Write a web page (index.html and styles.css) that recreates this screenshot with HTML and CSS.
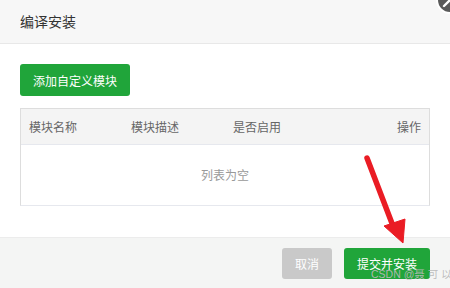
FILE: index.html
```html
<!DOCTYPE html>
<html lang="zh">
<head>
<meta charset="utf-8">
<link rel="stylesheet" href="styles.css">
</head>
<body>
<div class="dialog">
  <div class="header">编译安装</div>
  <span class="close" aria-label="关闭">
    <svg width="30" height="30" viewBox="0 0 30 30"><circle cx="15" cy="15" r="13" fill="#5a5a5a" stroke="#fff" stroke-width="2"/><path d="M9 21 L21 9 M9 9 L21 21" stroke="#fff" stroke-width="2.4" stroke-linecap="round"/></svg>
  </span>
  <div class="content">
    <button class="btn btn-green btn-add">添加自定义模块</button>
    <div class="table">
      <div class="thead">
        <span class="c1">模块名称</span>
        <span class="c2">模块描述</span>
        <span class="c3">是否启用</span>
        <span class="c4">操作</span>
      </div>
      <div class="empty">列表为空</div>
    </div>
  </div>
  <div class="footer">
    <button class="btn btn-gray">取消</button>
    <button class="btn btn-green">提交并安装</button>
  </div>
  <svg class="arrow" width="450" height="288" viewBox="0 0 450 288">
    <path d="M367 158 L393 226" stroke="#ea1c24" stroke-width="5.5" stroke-linecap="round"/>
    <path d="M384 226 L405 219 L403 243 Z" fill="#ea1c24" stroke="#ea1c24" stroke-width="1" stroke-linejoin="round"/>
  </svg>
  <div class="watermark">CSDN @聂 可 以</div>
</div>
</body>
</html>
```
FILE: styles.css
```css
* { box-sizing: border-box; }
html, body { margin: 0; padding: 0; }
body {
  width: 450px;
  height: 288px;
  overflow: hidden;
  background: #fff;
  font-family: "Noto Sans CJK SC", "Noto Sans", sans-serif;
}
.dialog {
  position: relative;
  width: 450px;
  height: 288px;
  display: flex;
  flex-direction: column;
}
.header {
  height: 44px;
  background: #f7f7f7;
  border-bottom: 1px solid #e8e8e8;
  padding-left: 20px;
  font-size: 14px;
  line-height: 43px;
  color: #333;
}
.close {
  position: absolute;
  left: 435px;
  top: -15px;
  width: 30px;
  height: 30px;
}
.close svg { display: block; }
.content {
  flex: 1;
  padding: 20px 20px 0 20px;
}
.btn {
  border: 0;
  border-radius: 3px;
  color: #fff;
  font-family: inherit;
  font-size: 12px;
  padding: 0;
  cursor: pointer;
}
.btn-green { background: #20a53a; }
.btn-gray { background: #c9c9c9; }
.btn-add {
  width: 110px;
  height: 32px;
  display: block;
}
.table {
  margin-top: 12px;
  width: 410px;
  border: 1px solid #ddd;
  border-bottom-color: #e6e8ee;
}
.thead {
  height: 36px;
  background: #f4f4f4;
  border-bottom: 1px solid #e6e8ee;
  display: grid;
  grid-template-columns: 102px 102px 1fr auto;
  align-items: center;
  padding: 0 8px;
  font-size: 12px;
  color: #666;
}
.empty {
  height: 60px;
  line-height: 60px;
  text-align: center;
  font-size: 12px;
  color: #999;
}
.footer {
  height: 51px;
  background: #f4f5f4;
  border-top: 1px solid #ececec;
  display: flex;
  justify-content: flex-end;
  align-items: center;
  gap: 12px;
  padding: 0 20px 0 0;
}
.footer .btn { height: 31px; }
.footer .btn-gray { width: 50px; }
.footer .btn-green { width: 86px; }
.arrow {
  position: absolute;
  left: 0;
  top: 0;
  pointer-events: none;
}
.watermark {
  position: absolute;
  left: 371px;
  top: 267px;
  font-family: "Liberation Sans", "Noto Sans CJK SC", sans-serif;
  font-size: 10.5px;
  line-height: 14px;
  color: rgba(185,185,185,0.95);
  white-space: nowrap;
}
```
